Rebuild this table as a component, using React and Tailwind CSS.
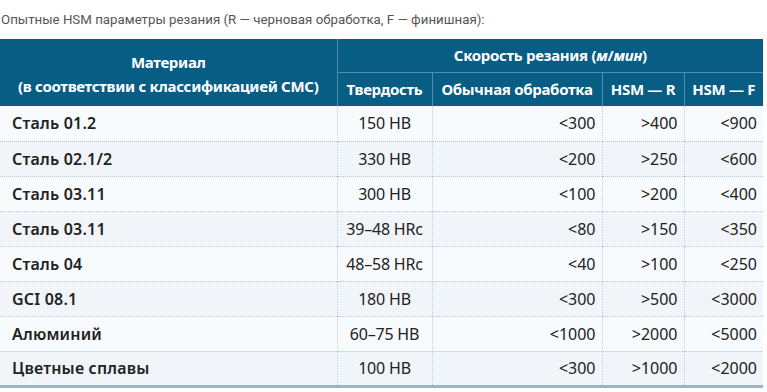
import React from 'react';

const rows = [
    ['Сталь 01.2', '150 HB', '<300', '>400', '<900'],
    ['Сталь 02.1/2', '330 HB', '<200', '>250', '<600'],
    ['Сталь 03.11', '300 HB', '<100', '>200', '<400'],
    ['Сталь 03.11', '39–48 HRc', '<80', '>150', '<350'],
    ['Сталь 04', '48–58 HRc', '<40', '>100', '<250'],
    ['GCI 08.1', '180 HB', '<300', '>500', '<3000'],
    ['Алюминий', '60–75 HB', '<1000', '>2000', '<5000'],
    ['Цветные сплавы', '100 HB', '<300', '>1000', '<2000'],
];

const cell = 'border-r border-dotted border-[#c3d0dc] h-[35px] pl-[12px] pr-[6px] whitespace-nowrap';

export default function App() {
    return (
        <div className="w-[767px] h-[392px] bg-white overflow-hidden">
            <p className="h-[39px] pt-[10px] pl-[1px] text-[13.3px] text-[#555] font-['Roboto',Arial,sans-serif]">
                Опытные HSM параметры резания (R — черновая обработка, F — финишная):
            </p>
            <table className="w-[763px] border-collapse table-fixed font-['Noto_Sans',sans-serif] text-[16px] text-[#222] border-b-[3px] border-[#9db3c6]">
                <colgroup>
                    <col className="w-[337px]" />
                    <col className="w-[95px]" />
                    <col className="w-[170px]" />
                    <col className="w-[82px]" />
                    <col className="w-[79px]" />
                </colgroup>
                <thead className="bg-[#075d84] text-white text-[15px] font-semibold tracking-[-0.3px]">
                    <tr className="h-[33px]">
                        <th rowSpan={2} className="border-r border-[#4f8fae] leading-[24px] pt-[2px]">
                            Материал<br />(в соответствии с классификацией СМС)
                        </th>
                        <th colSpan={4} className="border-b border-[#4f8fae]">
                            Скорость резания (<i>м</i>/<i>мин</i>)
                        </th>
                    </tr>
                    <tr className="h-[34px]">
                        <th className="border-r border-[#4f8fae] whitespace-nowrap">Твердость</th>
                        <th className="border-r border-[#4f8fae] whitespace-nowrap">Обычная обработка</th>
                        <th className="border-r border-[#4f8fae] whitespace-nowrap">HSM — R</th>
                        <th className="whitespace-nowrap">HSM — F</th>
                    </tr>
                </thead>
                <tbody>
                    {rows.map((r, i) => (
                        <tr key={i} className={`border-b border-dotted border-[#b9c7d4] ${i % 2 ? 'bg-[#f1f4f8]' : 'bg-[#f8fbfd]'}`}>
                            <td className={`${cell} font-semibold tracking-[0.2px]`}>{r[0]}</td>
                            <td className={`${cell} text-center !px-0 tracking-[-0.2px]`}>{r[1]}</td>
                            <td className={`${cell} text-right`}>{r[2]}</td>
                            <td className={`${cell} text-right`}>{r[3]}</td>
                            <td className={`${cell} text-right border-r-0`}>{r[4]}</td>
                        </tr>
                    ))}
                </tbody>
            </table>
        </div>
    );
}
